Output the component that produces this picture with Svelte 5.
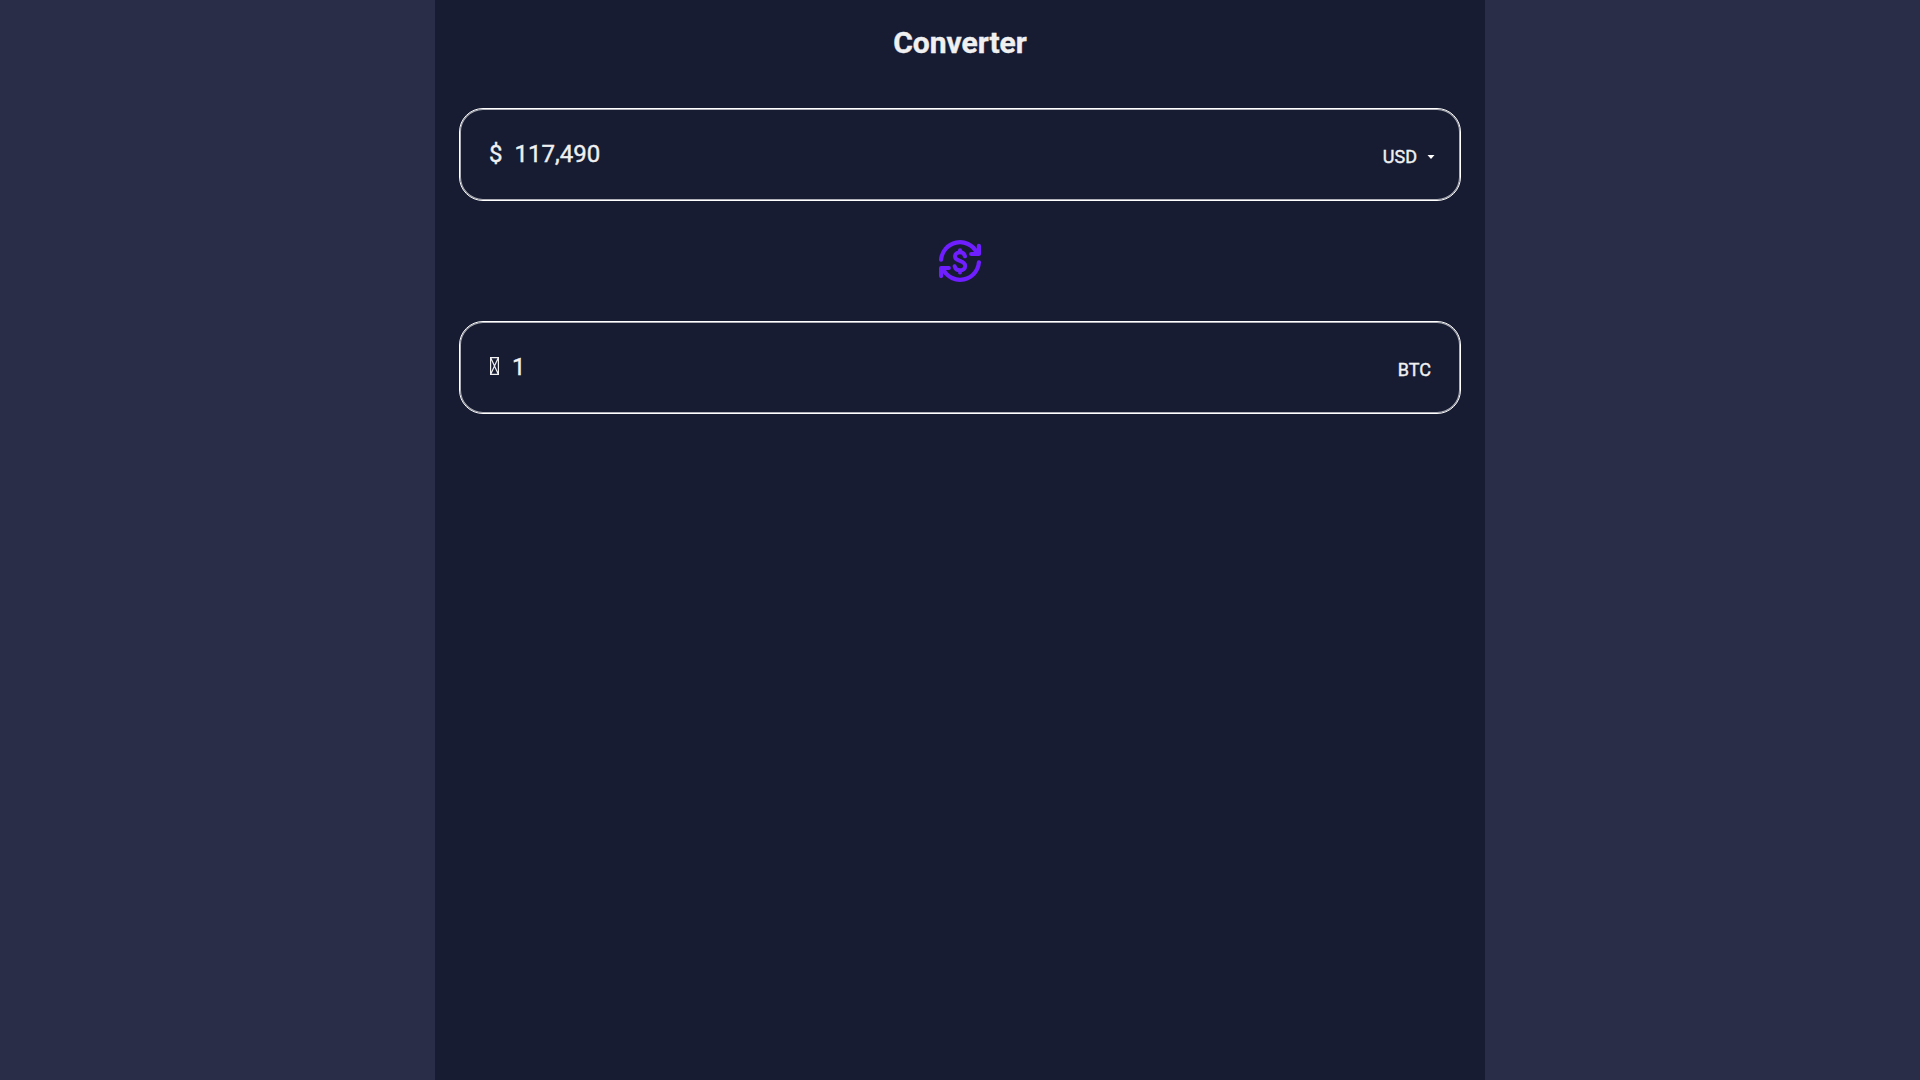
<script>
  let amount = $state('117,490');
  let coins = $state('1');
</script>

<main>
  <h1>Converter</h1>

  <section class="field">
    <div class="amount">
      <span class="symbol">$</span>
      <span>{amount}</span>
    </div>
    <div class="currency">
      <span>USD</span>
      <svg class="caret" width="8" height="4" viewBox="0 0 8 4"><path d="M.5 0h7L4 4Z" /></svg>
    </div>
  </section>

  <svg class="swap" width="42" height="42" viewBox="0 0 42 42" fill="none" stroke="currentColor" stroke-width="4.2" stroke-linecap="round" stroke-linejoin="round">
    <path d="M2.100 19.600A18.900 18.900 0 0 1 37.600 12.200" />
    <path d="M39.900 22.400A18.900 18.900 0 0 1 4.400 29.800" />
    <path d="M39.900 5.900V14H32.200" />
    <path d="M2.100 36.100V28H9.800" />
    <path d="M26 16.300C25.500 13.900 23.900 12.200 21 12.200 18 12.200 16 14.200 16 16.400 16 22 26.200 19.700 26.200 26 26.200 28.700 24 30.300 21 30.300 18 30.300 16.200 28.800 15.700 26.300M21 10.200v2M21 30.300v2.200" stroke-width="4" />
  </svg>

  <section class="field">
    <div class="amount">
      <svg class="coin" width="9" height="18" viewBox="0 0 9 18" role="img" aria-label="Bitcoin"><path d="M.6.6h7.800v16.800H.6ZM.6.6l7.800 16.800M8.400.6L.6 17.400" /></svg>
      <span>{coins}</span>
    </div>
    <div class="currency fixed">BTC</div>
  </section>
</main>

<style>
  :global(body) {
    margin: 0;
    background: #292d47;
  }
  main {
    box-sizing: border-box;
    width: 1050px;
    min-height: 100vh;
    margin: 0 auto;
    padding: 25px 24px 0;
    display: flex;
    flex-direction: column;
    align-items: center;
    background: #171c33;
    color: #f0f0f0;
    font-family: Roboto, sans-serif;
    -webkit-text-stroke: 0.4px currentColor;
  }
  h1 {
    margin: 0 0 47px;
    font-size: 30px;
    line-height: 36px;
    font-weight: 700;
  }
  .field {
    box-sizing: border-box;
    width: 100%;
    height: 93px;
    padding: 0 25px 0 29px;
    border: 1px solid #fff;
    border-radius: 24px;
    box-shadow: inset 0 0 0 1px rgba(255, 255, 255, 0.65);
    display: flex;
    align-items: center;
    justify-content: space-between;
  }
  .amount {
    display: flex;
    align-items: center;
    gap: 12px;
    height: 30px;
    padding-bottom: 1px;
    font-size: 24px;
    line-height: 30px;
  }
  .currency {
    display: flex;
    align-items: center;
    gap: 10px;
    padding-top: 4px;
    font-size: 18px;
    line-height: 22px;
  }
  .fixed {
    padding-right: 4px;
  }
  .caret {
    fill: #fff;
  }
  .swap {
    margin: 39px 0;
    color: #6f1fff;
  }
  .coin {
    margin: 0 1px 2px;
    fill: none;
    stroke: #f0f0f0;
    stroke-width: 1.2;
  }
</style>
